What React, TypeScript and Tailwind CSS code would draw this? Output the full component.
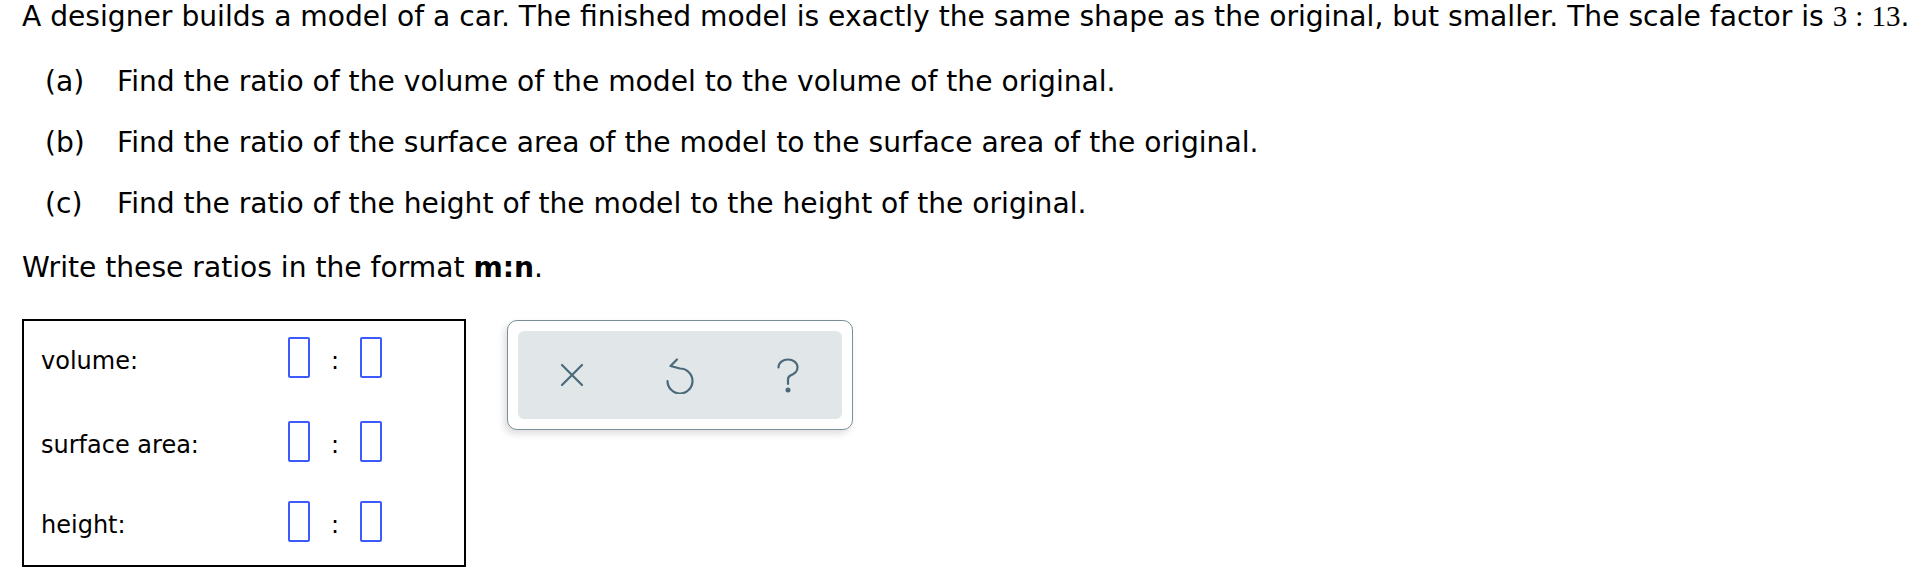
import React from 'react';

type RatioRowProps = {
  label: string;
  className?: string;
};

const RatioRow = ({ label, className = '' }: RatioRowProps) => {
  return (
    <div className={`flex items-center h-[41px] ${className}`}>
      <span className="w-[247px] mt-[6px] text-[24px] leading-[24px]">{label}</span>
      <span className="w-[22px] h-[41px] border-2 border-[#3d5afe] rounded-[2px] bg-white" />
      <span className="w-[50px] mt-[6px] text-center text-[24px] leading-[24px]">:</span>
      <span className="w-[22px] h-[41px] border-2 border-[#3d5afe] rounded-[2px] bg-white" />
    </div>
  );
};

const ClearIcon = () => (
  <svg width="24" height="24" viewBox="0 0 24 24" fill="none" stroke="currentColor" strokeWidth="2.2" strokeLinecap="round">
    <path d="M2 2 L22 22 M22 2 L2 22" />
  </svg>
);

const UndoIcon = () => (
  <svg width="28" height="38" viewBox="0 0 28 38" fill="none" stroke="currentColor" strokeWidth="2.2" strokeLinecap="round" strokeLinejoin="round">
    <path d="M1.5 25 A12.5 12.5 0 1 0 14 12.5 L4.5 10 L11 3.5" />
  </svg>
);

const HelpIcon = () => (
  <svg width="24" height="35" viewBox="0 0 24 35" fill="none" stroke="currentColor" strokeWidth="2.2" strokeLinecap="round">
    <path d="M2.5 9.5 C2.5 4.5 7 1.5 12 1.5 C17 1.5 21.5 4.5 21.5 9.5 C21.5 14 18 16 14.5 17.5 C13 18.2 12 19.5 12 21.5 V26" />
    <circle cx="12" cy="32" r="1.4" fill="currentColor" />
  </svg>
);

const Toolbar = () => {
  return (
    <div className="mt-px w-[346px] h-[110px] border-[1.5px] border-[#7a8f99] rounded-[10px] bg-white p-[10px] shadow-[-3px_4px_7px_rgba(0,0,0,0.13)]">
      <div className="h-full grid grid-cols-3 items-center bg-[#e1e6e9] rounded-[6px] text-[#4a6a79]">
        <button className="flex justify-center items-center h-full"><ClearIcon /></button>
        <button className="flex justify-center items-center h-full"><UndoIcon /></button>
        <button className="flex justify-center items-center h-full"><HelpIcon /></button>
      </div>
    </div>
  );
};

const parts = [
  { tag: '(a)', text: 'Find the ratio of the volume of the model to the volume of the original.' },
  { tag: '(b)', text: 'Find the ratio of the surface area of the model to the surface area of the original.' },
  { tag: '(c)', text: 'Find the ratio of the height of the model to the height of the original.' },
];

export default function App() {
  return (
    <div className="min-h-[588px] w-[1912px] overflow-hidden bg-white pl-[22px] text-black font-['DejaVu_Sans',sans-serif] text-[28.15px] leading-[28px]">
      <p className="whitespace-nowrap leading-[32px]">
        A designer builds a model of a car. The finished model is exactly the same shape as the original, but smaller. The scale factor is{' '}
        <span className="font-['Liberation_Serif',serif] text-[29px]">
          3<span className="mx-[0.28em]">:</span>13
        </span>
        .
      </p>

      <div className="mt-[35px] pl-[23px] flex flex-col gap-[33px]">
        {parts.map((p) => (
          <div key={p.tag} className="flex whitespace-nowrap">
            <span className="w-[72px]">{p.tag}</span>
            <span>{p.text}</span>
          </div>
        ))}
      </div>

      <p className="mt-[36px]">
        Write these ratios in the format <b>m:n</b>.
      </p>

      <div className="mt-[37px] flex items-start gap-[41px]">
        <div className="w-[444px] h-[248px] border-2 border-black pl-[17px] pt-[16px]">
          <RatioRow label="volume:" />
          <RatioRow label="surface area:" className="mt-[43px]" />
          <RatioRow label="height:" className="mt-[39px]" />
        </div>
        <Toolbar />
      </div>
    </div>
  );
}
